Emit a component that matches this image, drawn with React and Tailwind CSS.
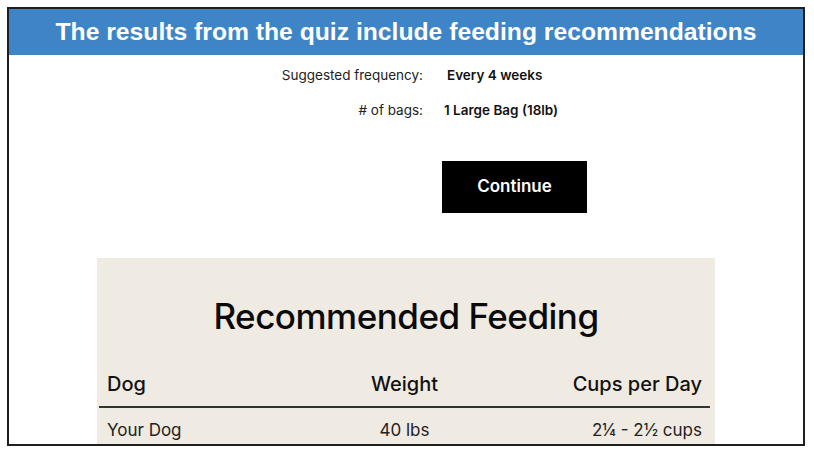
export default function App() {
  const body = { fontFamily: 'Inter, "Noto Sans", sans-serif' };
  return (
    <div className="w-[814px] h-[458px] bg-white overflow-hidden">
      <div className="ml-[7px] mt-[7px] w-[798px] h-[439px] border-2 border-[#1f1f1f] overflow-hidden">
        <div
          className="h-[46px] bg-[#3d85c6] flex items-center justify-center text-white font-bold text-[24.7px] leading-none"
          style={{ fontFamily: '"Liberation Sans", Arial, sans-serif' }}
        >
          The results from the quiz include feeding recommendations
        </div>
        <div style={body} className="text-[#111]">
          <div className="mt-[10px] flex items-center h-[20px] text-[13.5px]">
            <div className="w-[414px] text-right text-[#222]">Suggested frequency:</div>
            <div className="ml-[24px] font-semibold">Every 4 weeks</div>
          </div>
          <div className="mt-[15px] flex items-center h-[20px] text-[13.5px]">
            <div className="w-[414px] text-right text-[#222]">{"# of bags:"}</div>
            <div className="ml-[21px] font-semibold">1 Large Bag (18lb)</div>
          </div>
          <div className="mt-[41px] ml-[433px] w-[145px] h-[52px] bg-black text-white flex items-center justify-center text-[17px] font-semibold">
            Continue
          </div>
          <div className="mt-[45px] ml-[88px] w-[618px] h-[200px] bg-[#f0ebe2]">
            <div className="pt-[36px] text-center text-[35px] font-medium leading-[44px] tracking-[-0.5px] text-[#0a0a0a]">
              Recommended Feeding
            </div>
            <div className="ml-[2px] mr-[5px] mt-[24px]">
              <div className="flex items-center h-[46px] border-b-2 border-[#333] text-[20px] font-medium px-[8px]">
                <div className="flex-1">Dog</div>
                <div className="flex-1 text-center">Weight</div>
                <div className="flex-1 text-right">Cups per Day</div>
              </div>
              <div className="flex items-center h-[46px] text-[17px] px-[8px] text-[#222]">
                <div className="flex-1">Your Dog</div>
                <div className="flex-1 text-center">40 lbs</div>
                <div className="flex-1 text-right">2¼ - 2½ cups</div>
              </div>
            </div>
          </div>
        </div>
      </div>
    </div>
  );
}
